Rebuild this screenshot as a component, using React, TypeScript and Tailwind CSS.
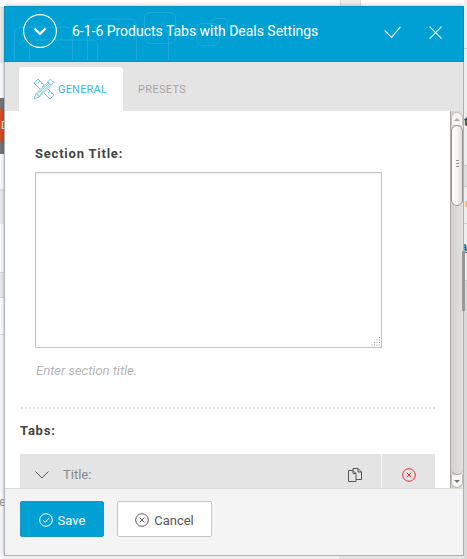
import React from "react";

const dialogFont = "font-['Roboto','Liberation_Sans',sans-serif]";

function CircleIcon({ kind, className }: { kind: "check" | "x"; className: string }) {
  return (
    <svg viewBox="0 0 14 14" width="14" height="14" fill="none" stroke="currentColor" className={className}>
      <circle cx="7" cy="7" r="6.3" />
      {kind === "check" ? <path d="M3.8 7.2 6.2 9.4 10.2 4.9" /> : <path d="M4.7 4.7l4.6 4.6M9.3 4.7l-4.6 4.6" />}
    </svg>
  );
}

function PencilRuler() {
  return (
    <svg viewBox="0 0 22 22" width="22" height="22" fill="none" stroke="#5cc6e8" strokeWidth="0.9" className="shrink-0">
      <path d="M5 1 21 17l-4 4L1 5z" />
      <path d="m7 3-2 2m4 0-1 1m3 1-2 2m8 4-2 2m4 0-1 1" />
      <path fill="#fff" d="M17.5 1.2 20.8 4.5 6.3 19 1.2 20.8 3 15.7z" />
      <path d="m15 3.7 3.3 3.3M3 15.7l1.3.4.4 1.2 1.2.4.4 1.3M4.3 16.1 16.2 4.8M5.9 17.7 17.3 6" />
    </svg>
  );
}

function Header() {
  return (
    <header className="relative flex h-14 shrink-0 items-center border border-[#058fbe] bg-[#00a0d5] text-white">
      <svg className="absolute left-0 top-0" width="250" height="54" fill="none" stroke="#1eabdb" strokeWidth="1">
        <path d="M9.500 53V28q0-8 8-8h42q8 0 8 8v25M24.500 53V39q0-6 6-6h56q6 0 6 6v14M82.500 53V19q0-7 7-7h35q7 0 7 7v34M132.500 22h24q7 0 7 7v24" />
        <rect x="139.500" y="5.500" width="31" height="31" rx="6" />
        <rect x="191.500" y="16.500" width="23" height="22" rx="6" />
        <rect x="206.500" y="11.500" width="16" height="16" rx="4" />
      </svg>
      <svg className="relative ml-[18px] -mt-1.5 shrink-0" width="34" height="34" fill="none" stroke="white">
        <circle cx="17" cy="17" r="16.400" strokeWidth="1.100" />
        <path d="m11.500 14.500 5.500 5.400L22.500 14.500" strokeWidth="2.300" />
      </svg>
      <h1 className="relative ml-[15px] -mt-1.5 whitespace-nowrap text-[14px] leading-5 tracking-[-0.020px]">6-1-6 Products Tabs with Deals Settings</h1>
      <div className="-mt-1 ml-auto mr-[21px] flex items-center gap-[28px]">
        <svg width="17" height="12" fill="none" stroke="white" strokeWidth="1.100"><path d="M.6 4.500 7.600 11.300 16.400.8" /></svg>
        <svg width="13" height="13" fill="none" stroke="white" strokeWidth="1.100"><path d="m.6.6 12 12m0-12-12 12" /></svg>
      </div>
    </header>
  );
}

function ScrollBar() {
  return (
    <div className="flex w-[13px] shrink-0 flex-col border-l border-[#a9a8a3] bg-[linear-gradient(to_right,#d2d1cd,#e4e2df)]">
      <div className="mt-px flex h-[13px] items-center justify-center rounded-t-md border border-b-0 border-[#c4c2be] bg-[#f5f4f2]">
        <svg width="6" height="3"><path d="M3 0 6 3H0z" fill="#aaa9a6" /></svg>
      </div>
      <div className="flex h-[81px] flex-col items-center justify-center gap-[2px] rounded-[6px] border border-[#979692] bg-[linear-gradient(to_right,#ffffff,#f7f6f5_50%,#dddcd8)] pb-1">
        <i className="h-px w-[3px] bg-[#969591]" /><i className="h-px w-[3px] bg-[#969591]" /><i className="h-px w-[3px] bg-[#969591]" />
      </div>
      <div className="flex-1 rounded-b-md border-b border-[#a9a8a3]" />
      <div className="flex h-[13px] items-center justify-center rounded-b-md border border-t-0 border-[#bbb9b5] bg-[#f7f6f5]">
        <svg width="6" height="3"><path d="M0 0h6L3 3z" fill="#777" /></svg>
      </div>
    </div>
  );
}

function LeftPage() {
  return (
    <div className="flex w-[4px] shrink-0 flex-col overflow-hidden bg-white font-['Roboto',sans-serif]">
      <div className="h-[8px] border-b border-[#ddd]" />
      <div className="h-[55px] bg-[#efefef]" />
      <div className="h-[35px]" />
      <div className="h-[56px] border-y-[12px] border-[#777] bg-[#d64f22] text-[11px] leading-[32px] text-white"><span className="ml-px">D</span></div>
      <div className="h-[35px]" />
      <div className="h-[35px] border-t-2 border-[#e4e4e4] bg-[#eee]" />
      <div className="h-[48px]" />
      <div className="h-[26px] border-y border-[#ddd] bg-[#eee]" />
      <div className="h-[37px] border-b border-[#ddd]" />
      <div className="h-[158px] bg-[#fbfbfb]" />
      <div className="-ml-[1px] h-4 text-[13px] leading-[18px] text-[#999]">e</div>
      <div className="flex-1 bg-[#fbfbfb]" />
    </div>
  );
}

function RightPage() {
  return (
    <div className="flex w-[3px] shrink-0 flex-col overflow-hidden bg-[#e8e8e8] font-['Liberation_Sans',sans-serif]">
      <div className="h-[49px] border-b border-[#ccc] bg-[#eee]" />
      <div className="h-[66px] bg-[#eee]" />
      <div className="h-[12px] bg-[#eee] text-[13px] font-bold leading-[14px] text-[#444]">t</div>
      <div className="h-[39px] border-b border-[#ccc] bg-[#eee]" />
      <div className="h-[21px] border-b border-[#ccc] bg-[#ddd]" />
      <div className="h-[37px] border-b border-[#ccc] bg-[#eee] pt-[14px]"><div className="ml-px h-[6px] bg-[#ffc04a]" /></div>
      <div className="h-[57px] border-b border-[#ccc] bg-[#eee] pt-[16px] text-[13px] font-bold leading-[14px] text-[#08719b]"><span className="-ml-[4px] underline">a</span></div>
      <div className="flex-1 bg-[#d9d9d9]" />
    </div>
  );
}

export default function App() {
  return (
    <div className="relative flex h-[559px] w-[467px] overflow-hidden bg-white">
      <LeftPage />
      <div className="flex w-[460px] shrink-0 flex-col">
        <div className="flex h-[6px] shrink-0"><div className="ml-[336px] w-[21px] border-x border-[#ddd] bg-[#eee]" /></div>
        <main className={`${dialogFont} flex h-[550px] shrink-0 flex-col bg-white shadow-[0_0_5px_rgba(0,0,0,.28)]`}>
          <Header />
          <div className="flex min-h-0 flex-1 flex-col border-x border-b border-[#aab1bd]">
            <nav className="flex h-[49px] shrink-0 items-end bg-[#e4e4e4] pl-[14px] text-[11px]">
              <div className="flex h-11 w-[104px] items-center rounded-t bg-white pl-[14px] text-[#35b8e2]">
                <PencilRuler /><span className="ml-[3px] pt-0.5 tracking-[0.180px]">GENERAL</span>
              </div>
              <div className="ml-[15px] flex h-11 items-center pt-0.5 tracking-[0.330px] text-[#a5a5a5]">PRESETS</div>
            </nav>
            <div className="flex min-h-0 flex-1 overflow-hidden">
              <div className="w-[445px] shrink-0">
                <section className="ml-[30px] pt-[34px]">
                  <label className="block h-[18px] text-[13px] font-bold leading-[18px] tracking-[0.780px] text-[#444]">Section Title:</label>
                  <div className="mt-[9px] flex h-[176px] w-[347px] items-end justify-end border border-[#c5c5c5] shadow-[inset_0_1px_2px_rgba(0,0,0,.07)]">
                    <svg width="10" height="10" fill="#999">
                      {[0, 1, 2, 3].map((r) => Array.from({ length: r + 1 }, (_, c) => <rect key={`${r}-${c}`} x={8 - c * 2.5} y={r * 2.5} width="1" height="1" />))}
                    </svg>
                  </div>
                  <p className="ml-px mt-[14px] h-[18px] text-[13px] italic leading-[18px] text-[#b4b4b4]">Enter section title.</p>
                </section>
                <div className="ml-[15px] mt-[27px] h-[2px] w-[415px] bg-[repeating-linear-gradient(to_right,transparent_0_1px,#e2e2e2_1px_3px,transparent_3px_4px)]" />
                <section className="ml-[15px] mt-[13px]">
                  <h2 className="h-[18px] text-[13px] font-bold leading-[18px] tracking-[0.780px] text-[#444]">Tabs:</h2>
                  <div className="mt-[14px] flex h-[42px] w-[415px] items-center bg-[#e4e4e4]">
                    <svg className="ml-[15px]" width="14" height="8" fill="none" stroke="#555"><path d="m.5.5 6.400 6.500L13.400.5" /></svg>
                    <span className="ml-[14px] text-[13px] text-[#888]">Title:</span>
                    <svg className="ml-auto mr-[19px]" width="14" height="14" fill="none" stroke="#555">
                      <path d="M.5 2.500H5l3 3v8H.5zM5 2.500v3h3M5 2.500V.5h5l3.500 3.500v7.500H8M10 .5V4h3.500" />
                    </svg>
                    <div className="flex h-full w-[54px] items-center justify-center border-l border-[#f7f7f7]"><CircleIcon kind="x" className="text-[#f52929]" /></div>
                  </div>
                </section>
              </div>
              <ScrollBar />
            </div>
            <footer className="flex h-[67px] shrink-0 gap-[13px] border-t border-[#dcdcdc] bg-[#f4f4f4] pl-[15px] pt-[12px] text-[13px]">
              <button className="flex h-9 w-[84px] items-center justify-center gap-[5px] rounded-[2px] border border-[#1897c4] bg-[#00a0d5] pt-px text-white"><CircleIcon kind="check" className="" /><span className="pt-0.5">Save</span></button>
              <button className="flex h-9 w-[95px] items-center justify-center gap-[5px] rounded-[2px] border border-[#c7c7c7] bg-white pt-px text-[#555]"><CircleIcon kind="x" className="" /><span className="pt-0.5">Cancel</span></button>
            </footer>
          </div>
        </main>
        <div className="flex h-[3px] bg-[#e3e3e3]"><div className="w-[335px] bg-[#f0f0f0]" /></div>
      </div>
      <RightPage />
      <div className="absolute left-[462px] top-[251px] h-[60px] w-[3px] bg-[#999]" />
    </div>
  );
}
